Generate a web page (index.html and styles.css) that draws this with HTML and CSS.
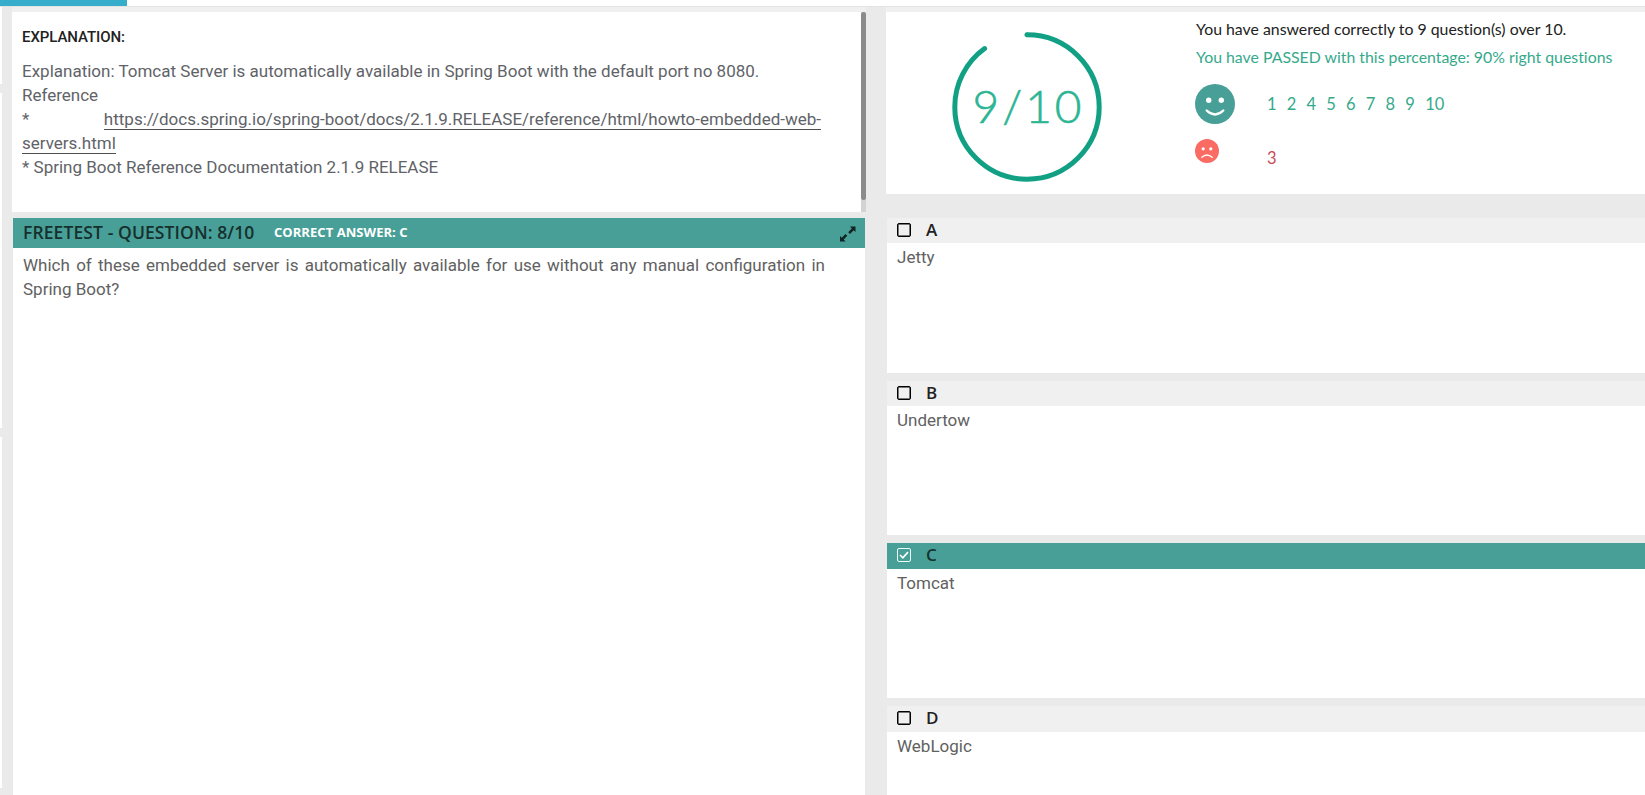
FILE: index.html
```
<!DOCTYPE html>
<html lang="en">
<head>
<meta charset="utf-8">
<title>Freetest - Question 8/10</title>
<link rel="stylesheet" href="styles.css">
</head>
<body>
<div class="page">
  <header class="topbar"><div class="progress"></div></header>
  <main class="layout">
    <aside class="rail"><i class="rail-a"></i><i class="rail-b"></i><i class="rail-c"></i></aside>
    <section class="left">
      <div class="explanation">
        <div class="explanation-body">
          <h2><span>EXPLANATION:</span></h2>
          <p class="line"><span>Explanation: Tomcat Server is automatically available in Spring Boot with the default port no 8080.</span></p>
          <p class="line">Reference</p>
          <p class="line spread"><span>*</span><a>https://docs.spring.io/spring-boot/docs/2.1.9.RELEASE/reference/html/howto-embedded-web-</a></p>
          <p class="line"><a>servers.html</a></p>
          <p class="line">* Spring Boot Reference Documentation 2.1.9 RELEASE</p>
        </div>
        <div class="scroll"><div class="thumb"></div></div>
      </div>
      <div class="question">
        <div class="question-head">
          <span class="q-title">FREETEST - QUESTION: 8/10</span>
          <span class="q-answer">CORRECT ANSWER: C</span>
          <svg class="expand" width="16" height="16" viewBox="0 0 16 16"><path d="M10 0.500H15.500V6L13.700 4.300L10 8L8.200 6.200L11.800 2.500ZM5.500 15.500H0V10L1.800 11.700L5.500 8L7.300 9.800L3.700 13.500Z"/></svg>
        </div>
        <div class="question-body">Which of these embedded server is automatically available for use without any manual configuration in Spring Boot?</div>
      </div>
    </section>
    <section class="right">
      <div class="result">
        <svg class="ring" width="150" height="150" viewBox="0 0 150 150">
          <circle cx="75" cy="75" r="72.200" pathLength="100" stroke-dasharray="90 10" transform="rotate(-90 75 75)"/>
          <text x="75" y="91" text-anchor="middle" textLength="109">9/10</text>
        </svg>
        <div class="summary">
          <p class="sum"><span class="s1">You have answered correctly to 9 question(s) over 10.</span></p>
          <p class="sum pass"><span class="s2">You have PASSED with this percentage: 90% right questions</span></p>
          <div class="good">
            <svg width="40" height="40" viewBox="0 0 40 40"><circle cx="20" cy="20" r="20" fill="#479f97"/><circle cx="13.700" cy="16.300" r="2.700" fill="#fff"/><circle cx="26.300" cy="16.300" r="2.700" fill="#fff"/><path d="M11.700 26.500Q20 34.300 28.300 26.500" fill="none" stroke="#fff" stroke-width="2.400" stroke-linecap="round"/></svg>
            <div class="nums"><span>1</span><span>2</span><span>4</span><span>5</span><span>6</span><span>7</span><span>8</span><span>9</span><span>10</span></div>
          </div>
          <div class="bad">
            <svg width="24" height="24" viewBox="0 0 24 24"><circle cx="12" cy="12" r="12" fill="#fa6b64"/><circle cx="8.200" cy="9.800" r="1.600" fill="#fff"/><circle cx="15.800" cy="9.800" r="1.600" fill="#fff"/><path d="M6.800 18.300Q12 13.500 17.200 18.300" fill="none" stroke="#fff" stroke-width="1.400" stroke-linecap="round"/></svg>
            <div class="nums wrong"><span>3</span></div>
          </div>
        </div>
      </div>
      <div class="options">
        <article class="option"><div class="option-head"><i class="box"></i><b>A</b></div><div class="option-body">Jetty</div></article>
        <article class="option"><div class="option-head"><i class="box"></i><b>B</b></div><div class="option-body">Undertow</div></article>
        <article class="option chosen"><div class="option-head"><i class="box"><svg width="10" height="10" viewBox="0 0 10 10"><path d="M1 5L3.800 7.800L9 2.200" fill="none" stroke="#fff" stroke-width="1.700"/></svg></i><b>C</b></div><div class="option-body">Tomcat</div></article>
        <article class="option last"><div class="option-head"><i class="box"></i><b>D</b></div><div class="option-body">WebLogic</div></article>
      </div>
    </section>
  </main>
</div>
</body>
</html>
```
FILE: styles.css
```
* { box-sizing: border-box; }
body { margin: 0; overflow: hidden; background: #eaeaea; font-family: Roboto, sans-serif; }
p, h2 { margin: 0; }
.page { width: 1645px; height: 795px; display: flex; flex-direction: column; overflow: hidden; }
.topbar { height: 7px; flex: none; background: #fff; border-bottom: 1px solid #e4e4e4; }
.progress { width: 127px; height: 6px; background: #35adcb; }
.layout { flex: 1; display: flex; min-height: 0; }
.rail { width: 12px; display: flex; flex-direction: column; gap: 9px; }
.rail i { width: 2px; background: #fff; }
.rail-a { height: 77px; }
.rail-b { height: 335px; }
.rail-c { height: 351px; }
.left { width: 854px; display: flex; flex-direction: column; border-top: 5px solid #f0f0f0; }
.explanation { height: 200px; flex: none; background: #fff; display: flex; justify-content: space-between; }
.explanation-body { width: 809px; padding: 15px 0 0 10px; }
.explanation-body h2 { font-size: 15px; font-weight: 500; line-height: 20px; margin-bottom: 12px; letter-spacing: -0.08px; color: #222; }
.line { font-size: 17px; line-height: 24px; color: #5f6368; white-space: nowrap; }
.spread { display: flex; justify-content: space-between; }
.line a { display: inline-block; height: 23px; line-height: 24px; border-bottom: 1px solid #4d4f53; }
.scroll { width: 5px; background: #d3d3d3; }
.thumb { height: 188px; border-radius: 3px; background: #8b8b8b; }
.question { flex: 1; margin: 6px 1px 0 1px; background: #fff; }
.question-head { height: 30px; background: #479f97; display: flex; align-items: center; padding: 0 9px 2px 10px; white-space: nowrap; font-family: "Open Sans", sans-serif; }
.q-title { width: 251px; font-size: 17.500px; letter-spacing: 0.1px; font-weight: 600; color: #16302e; }
.q-answer { font-size: 13px; letter-spacing: 0.05px; font-weight: 700; color: #fff; }
.expand { margin-left: auto; margin-top: 3px; fill: #112423; }
.question-body { width: 812px; padding: 5px 0 0 10px; font-size: 17px; line-height: 24px; color: #616161; text-align: justify; }
.right { flex: 1; margin-left: 20px; display: flex; flex-direction: column; }
.result { height: 187px; flex: none; border-top: 5px solid #f0f0f0; background: #fff; display: flex; padding-left: 66px; }
.ring { margin-top: 20px; flex: none; }
.ring circle { fill: none; stroke: #11a084; stroke-width: 5; stroke-linecap: round; }
.ring text { font: 300 46px Lato, sans-serif; fill: #2bb594; stroke: #2bb594; stroke-width: 0.600px; }
.summary { margin-left: 93px; padding-top: 3px; font-family: Lato, sans-serif; font-variant-ligatures: none; }
.sum { height: 28px; line-height: 28px; padding-left: 1px; font-size: 15.850px; font-weight: 400; color: #222; white-space: nowrap; }
.sum.pass { color: #35a98b; }
.good { height: 40px; margin-top: 13px; display: flex; align-items: center; }
.nums { display: flex; gap: 10.200px; margin-left: 32px; font-size: 16.500px; line-height: 20px; font-weight: 400; color: #35a98b; }
.bad { height: 30px; margin-top: 15px; display: flex; }
.nums.wrong { margin: 9px 0 0 48px; color: #ca4a55; }
.options { margin: 24px 0 0 1px; display: grid; grid-template-rows: 155px 154px 155px 89px; row-gap: 8px; flex: 1; }
.option { background: #fff; display: flex; flex-direction: column; }
.option-head { height: 25px; flex: none; display: flex; align-items: center; gap: 15px; padding: 0 0 1px 10px; background: #f0f0f0; font: 17px/22px "Open Sans", sans-serif; color: #222; }
.option b { font-weight: 600; }
.chosen .option-head { height: 26px; padding-bottom: 2px; background: #479f97; color: #173330; }
.box { width: 14px; height: 14px; border: 1.500px solid #000; border-radius: 2px; display: flex; box-shadow: inset 0 0 0 0.500px #000; }
.chosen .box { border: 1px solid #e9fffc; padding: 1px; box-shadow: none; }
.last .option-head { height: 26px; padding-bottom: 2px; }
.option-body { padding: 2px 0 0 10px; font-size: 17px; line-height: 24px; color: #616161; }
```
